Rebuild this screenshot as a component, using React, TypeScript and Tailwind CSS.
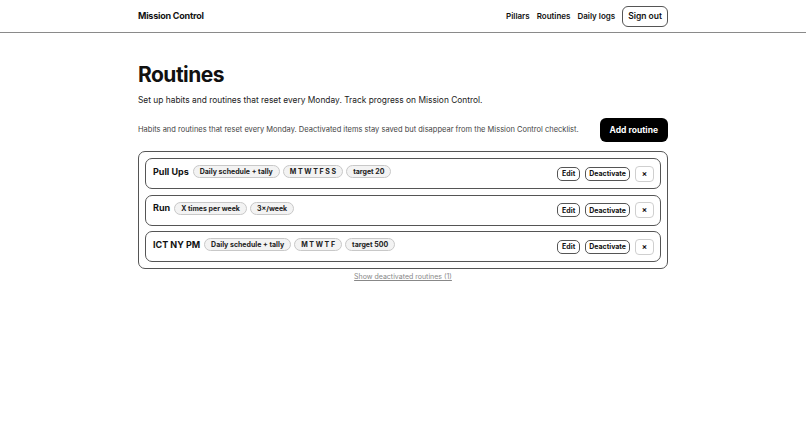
import React from 'react';

type Routine = {
  name: string;
  badges: string[];
};

const routines: Routine[] = [
  { name: 'Pull Ups', badges: ['Daily schedule + tally', 'M T W T F S S', 'target 20'] },
  { name: 'Run', badges: ['X times per week', '3×/week'] },
  { name: 'ICT NY PM', badges: ['Daily schedule + tally', 'M T W T F', 'target 500'] },
];

function Badge({ label }: { label: string }) {
  return (
    <span className="whitespace-nowrap rounded-full border border-[#c8c8c8] bg-[#f3f3f3] px-[6px] py-[1px] text-[7px] font-bold leading-[9px] text-[#222]">
      {label}
    </span>
  );
}

function RoutineRow({ routine }: { routine: Routine }) {
  return (
    <div className="flex h-[31px] items-center justify-between rounded-[7px] border border-[#555] pl-[7px] pr-[6px]">
      <div className="-mt-[4px] flex items-center gap-[3px]">
        <span className="mr-[1px] text-[9px] font-bold text-[#111]">{routine.name}</span>
        {routine.badges.map((b) => (
          <Badge key={b} label={b} />
        ))}
      </div>
      <div className="flex items-center gap-[5px]">
        <button className="h-[14px] rounded-[5px] border border-[#555] px-[4px] text-[7px] font-bold leading-none text-[#111]">
          Edit
        </button>
        <button className="h-[14px] rounded-[5px] border border-[#555] px-[3px] text-[7px] font-bold leading-none text-[#111]">
          Deactivate
        </button>
        <button className="flex h-[16px] w-[19px] items-center justify-center rounded-[4px] border border-[#cfcfcf] text-[8px] font-bold leading-none text-[#111]">
          ×
        </button>
      </div>
    </div>
  );
}

export default function App() {
  return (
    <div className="min-h-screen bg-white text-[#111]" style={{ fontFamily: 'Inter, "Liberation Sans", sans-serif' }}>
      <header className="border-b border-[#8a8a8a]">
        <div className="mx-auto flex h-[32px] w-[530px] items-center justify-between">
          <span className="text-[9px] font-bold tracking-tight">Mission Control</span>
          <nav className="flex items-center gap-[7px] text-[8px] font-semibold">
            <span>Pillars</span>
            <span>Routines</span>
            <span>Daily logs</span>
            <button className="h-[21px] rounded-[6px] border border-[#555] px-[5px] text-[8.5px] font-semibold">
              Sign out
            </button>
          </nav>
        </div>
      </header>

      <main className="mx-auto w-[530px] pt-[28px]">
        <h1 className="text-[21px] font-bold leading-[28px] tracking-tight">Routines</h1>
        <p className="mt-[4px] text-[8.4px] leading-[14px] text-[#222]">
          Set up habits and routines that reset every Monday. Track progress on Mission Control.
        </p>

        <div className="mt-[11px] flex h-[24px] items-center justify-between">
          <p className="whitespace-nowrap text-[7.5px] text-[#444]">
            Habits and routines that reset every Monday. Deactivated items stay saved but disappear from the Mission Control checklist.
          </p>
          <button className="h-[24px] whitespace-nowrap rounded-[6px] bg-black px-[10px] text-[8.5px] font-bold text-white">
            Add routine
          </button>
        </div>

        <div className="mt-[9px] flex flex-col gap-[5.5px] rounded-[7px] border border-[#555] p-[6px]">
          {routines.map((r) => (
            <RoutineRow key={r.name} routine={r} />
          ))}
        </div>

        <div className="mt-[3px] text-center text-[7px] leading-[10px]">
          <span className="text-[#888] underline">Show deactivated routines (1)</span>
        </div>
      </main>
    </div>
  );
}
